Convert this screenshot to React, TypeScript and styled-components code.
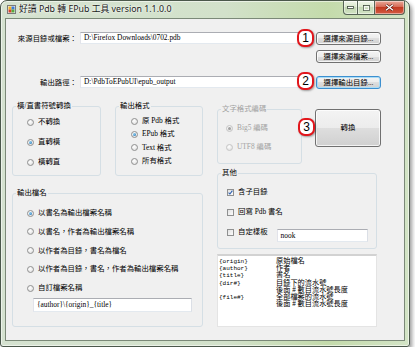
import React from "react";
import styled, { createGlobalStyle } from "styled-components";

const GlobalStyle = createGlobalStyle`
  html, body { margin: 0; padding: 0; background: #fff; }
  body {
    font-family: "Liberation Serif", "Noto Sans CJK TC", serif;
    font-size: 7.4px;
    line-height: 10px;
    color: #000;
  }
`;

const Window = styled.div`
  box-sizing: border-box;
  width: 410px;
  height: 347px;
  display: flex;
  flex-direction: column;
  padding: 0 4px 5px 4px;
  border: 1px solid #4b584b;
  border-radius: 7px 7px 3px 3px;
  background: linear-gradient(90deg, #d5e2d0 0%, #d2e1ca 55%, #c4dbab 80%, #d3e4c6 100%);
  box-shadow: inset 0 0 0 1px rgba(255, 255, 255, 0.55), 2px 3px 4px rgba(0, 0, 0, 0.4);
`;

const TitleBar = styled.div`
  height: 17px;
  display: flex;
  align-items: flex-start;
`;

const AppIcon = styled.svg`
  flex: none;
  margin: 4px 3px 0 2px;
`;

const Title = styled.span`
  font-family: "Noto Sans", "Noto Sans CJK TC", sans-serif;
  font-size: 8.8px;
  line-height: 17px;
  color: #1a1a1a;
  white-space: nowrap;
  text-shadow: 0 0 4px #fff, 0 0 2px #fff;
`;

const Caption = styled.div`
  margin-left: auto;
  display: flex;
`;

const CaptionButton = styled.div<{ $w: number; $close?: boolean; $pos: "l" | "m" | "r" }>`
  box-sizing: border-box;
  width: ${(p) => p.$w}px;
  height: 14px;
  display: flex;
  align-items: center;
  justify-content: center;
  border: 1px solid #566456;
  border-top: none;
  border-left: ${(p) => (p.$pos === "l" ? "1px solid #566456" : "none")};
  border-radius: ${(p) => (p.$pos === "l" ? "0 0 0 4px" : p.$pos === "r" ? "0 0 4px 0" : "0")};
  background: ${(p) =>
    p.$close
      ? "linear-gradient(#e9a898, #d66a55 45%, #c23a21 50%, #d45b43 100%)"
      : "linear-gradient(rgba(255,255,255,0.7), rgba(235,242,230,0.5) 45%, rgba(190,210,180,0.5) 50%, rgba(215,230,205,0.6) 100%)"};
  box-shadow: inset 0 0 0 1px rgba(255, 255, 255, 0.45);
`;

const Content = styled.div`
  flex: 1;
  box-sizing: border-box;
  border: 1px solid #7b8978;
  background: #f0f0f0;
  padding-top: 13px;
`;

const PathGrid = styled.div`
  display: grid;
  grid-template-columns: 74px 236px 65px;
  grid-template-rows: 13px 21px 13px;
  row-gap: 5px;
  align-items: start;
`;

const FieldLabel = styled.div`
  line-height: 13px;
  text-align: right;
  padding-right: 3px;
  white-space: nowrap;
`;

const Cell = styled.div`
  position: relative;
`;

const TextBox = styled.div<{ $w: number; $h?: number }>`
  box-sizing: border-box;
  width: ${(p) => p.$w}px;
  height: ${(p) => p.$h ?? 12}px;
  line-height: ${(p) => (p.$h ?? 12) - 2}px;
  padding: 0 3px;
  border: 1px solid;
  border-color: #abadb3 #dbdfe6 #e3e9ef #e2e3ea;
  background: #fff;
  white-space: nowrap;
  overflow: hidden;
  flex: none;
`;

const Button = styled.div<{ $w: number; $h: number; $focus?: boolean }>`
  box-sizing: border-box;
  width: ${(p) => p.$w}px;
  height: ${(p) => p.$h}px;
  display: flex;
  align-items: center;
  justify-content: center;
  white-space: nowrap;
  border: 1px solid ${(p) => (p.$focus ? "#3c8fcf" : "#707070")};
  border-radius: 3px;
  background: linear-gradient(#f3f3f3, #ececec 50%, #dedede 50%, #d0d0d0);
  box-shadow: inset 0 0 0 1px ${(p) => (p.$focus ? "#a9dcf7" : "rgba(255,255,255,0.75)")};
`;

const Badge = styled.div<{ $left: number; $top: number }>`
  position: absolute;
  left: ${(p) => p.$left}px;
  top: ${(p) => p.$top}px;
  box-sizing: border-box;
  width: 17px;
  height: 18px;
  border: 2px solid #e2161c;
  border-radius: 7px;
  background: #fff;
  color: #000;
  font-family: "Liberation Sans", Arial, sans-serif;
  font-size: 12px;
  line-height: 14px;
  text-align: center;
  box-shadow: 1px 1px 2px rgba(0, 0, 0, 0.35);
  z-index: 2;
`;

const Lower = styled.div`
  display: grid;
  grid-template-columns: 191px 164px;
  column-gap: 14px;
  margin: 13px 0 0 6px;
  align-items: start;
`;

const Column = styled.div`
  display: flex;
  flex-direction: column;
`;

const TopRow = styled.div`
  display: flex;
  align-items: flex-start;
`;

const Group = styled.fieldset<{ $w: number; $h: number; $disabled?: boolean; $mt?: number; $ml?: number }>`
  box-sizing: border-box;
  margin: ${(p) => p.$mt ?? 0}px 0 0 ${(p) => p.$ml ?? 0}px;
  padding: 0;
  min-width: 0;
  width: ${(p) => p.$w}px;
  height: ${(p) => p.$h}px;
  border: 1px solid #d5dfe5;
  border-radius: 3px;
  color: ${(p) => (p.$disabled ? "#a3a3a3" : "inherit")};
  flex: none;
`;

const Legend = styled.legend`
  margin-left: 3px;
  padding: 0 1px;
  line-height: 8px;
  white-space: nowrap;
`;

const OptionList = styled.div<{ $gap: number; $top: number; $left: number }>`
  display: flex;
  flex-direction: column;
  gap: ${(p) => p.$gap}px;
  padding: ${(p) => p.$top}px 0 0 ${(p) => p.$left}px;
`;

const Option = styled.div`
  display: flex;
  align-items: center;
  gap: 4px;
  height: 10px;
  line-height: 10px;
  white-space: nowrap;
`;

const RadioDot = styled.span<{ $checked?: boolean; $disabled?: boolean }>`
  position: relative;
  flex: none;
  box-sizing: border-box;
  width: 7px;
  height: 7px;
  border-radius: 50%;
  border: 1px solid ${(p) => (p.$disabled ? "#c6c6c6" : "#8f9090")};
  background: radial-gradient(circle at 40% 35%, #ffffff, #dadada);
  &::after {
    content: "";
    display: ${(p) => (p.$checked ? "block" : "none")};
    position: absolute;
    left: 1px;
    top: 1px;
    width: 3px;
    height: 3px;
    border-radius: 50%;
    background: ${(p) =>
      p.$disabled ? "#a0a0a0" : "radial-gradient(circle at 35% 35%, #8fd3f7, #1a68a8)"};
  }
`;

const CheckBoxFrame = styled.span`
  flex: none;
  box-sizing: border-box;
  width: 7px;
  height: 7px;
  display: flex;
  align-items: center;
  justify-content: center;
  border: 1px solid #8f9090;
  background: linear-gradient(135deg, #e2e2e2, #fbfbfb);
`;

const CustomName = styled.div`
  margin: 5px 0 0 20px;
`;

const NookBox = styled(TextBox)`
  align-self: flex-start;
  margin: 2px 0 0 5px;
`;

const ConvertWrap = styled.div`
  position: relative;
  margin: 7px 0 0 13px;
`;

const HelpBox = styled.div`
  box-sizing: border-box;
  width: 160px;
  height: 73px;
  margin-top: 5px;
  padding: 2px 0 0 1px;
  background: #fff;
  border: 1px solid #e4e4e4;
  border-top: 2px solid #d2d2d2;
  display: grid;
  grid-template-columns: 57px 1fr;
  grid-auto-rows: 7.2px;
  line-height: 7.2px;
  white-space: nowrap;
`;

const HelpKey = styled.span`
  font-family: "Liberation Mono", monospace;
  font-size: 6px;
`;

const HelpText = styled.span`
  font-size: 7.2px;
`;

function Radio({ label, checked, disabled }: { label: string; checked?: boolean; disabled?: boolean }) {
  return (
    <Option>
      <RadioDot $checked={checked} $disabled={disabled} />
      <span>{label}</span>
    </Option>
  );
}

function Check({ checked }: { checked?: boolean }) {
  return (
    <CheckBoxFrame>
      {checked && (
        <svg width="5" height="5" viewBox="0 0 5 5">
          <path d="M0.6 2.6 L1.9 4 L4.4 0.6" stroke="#2b5fb0" strokeWidth="1.1" fill="none" />
        </svg>
      )}
    </CheckBoxFrame>
  );
}

const helpRows: [string, string][] = [
  ["{origin}", "原始檔名"],
  ["{author}", "作者"],
  ["{title}", "書名"],
  ["{dir#}", "目錄下的流水號"],
  ["", "後面 # 數目流水號長度"],
  ["{file#}", "全部檔案的流水號"],
  ["", "後面 # 數目流水號長度"],
];

export default function App() {
  return (
    <>
      <GlobalStyle />
      <Window>
        <TitleBar>
          <AppIcon width="9" height="9" viewBox="0 0 9 9">
            <rect x="0.5" y="0.5" width="8" height="8" fill="#f4f4f4" stroke="#7a7a7a" />
            <rect x="1.5" y="1.5" width="3" height="3" fill="#f2b420" />
            <rect x="4.5" y="1.5" width="3" height="3" fill="#3b7ad8" />
            <rect x="1.5" y="4.5" width="3" height="3" fill="#d8402a" />
            <rect x="4.5" y="4.5" width="3" height="3" fill="#56a83c" />
          </AppIcon>
          <Title>好讀 Pdb 轉 EPub 工具 version 1.1.0.0</Title>
          <Caption>
            <CaptionButton $w={15} $pos="l">
              <svg width="7" height="3" viewBox="0 0 7 3">
                <rect x="0.5" y="0.5" width="6" height="2" fill="#fff" stroke="#3d4a3d" strokeWidth="0.8" />
              </svg>
            </CaptionButton>
            <CaptionButton $w={17} $pos="m">
              <svg width="7" height="6" viewBox="0 0 7 6">
                <rect x="0.5" y="0.5" width="6" height="5" fill="none" stroke="#3d4a3d" strokeWidth="0.8" />
                <rect x="1.3" y="1.8" width="4.4" height="2.9" fill="none" stroke="#fff" strokeWidth="0.9" />
              </svg>
            </CaptionButton>
            <CaptionButton $w={30} $pos="r" $close>
              <svg width="9" height="7" viewBox="0 0 9 7">
                <path d="M1 0.8 L8 6.2 M8 0.8 L1 6.2" stroke="#5a1a10" strokeWidth="2.6" />
                <path d="M1 0.8 L8 6.2 M8 0.8 L1 6.2" stroke="#fff" strokeWidth="1.4" />
              </svg>
            </CaptionButton>
          </Caption>
        </TitleBar>

        <Content>
          <PathGrid>
            <FieldLabel>來源目錄或檔案：</FieldLabel>
            <Cell>
              <TextBox $w={225}>D:\Firefox Downloads\0702.pdb</TextBox>
              <Badge $left={217} $top={-3}>1</Badge>
            </Cell>
            <Button $w={65} $h={13}>選擇來源目錄...</Button>

            <div />
            <div />
            <Button $w={65} $h={13}>選擇來源檔案...</Button>

            <FieldLabel>輸出路徑：</FieldLabel>
            <Cell>
              <TextBox $w={225}>D:\PdbToEPubUI\epub_output</TextBox>
              <Badge $left={217} $top={-4}>2</Badge>
            </Cell>
            <Button $w={65} $h={13} $focus>選擇輸出目錄...</Button>
          </PathGrid>

          <Lower>
            <Column>
              <TopRow>
                <Group $w={89} $h={74}>
                  <Legend>橫/直書符號轉換</Legend>
                  <OptionList $gap={10} $top={7} $left={14}>
                    <Radio label="不轉換" />
                    <Radio label="直轉橫" checked />
                    <Radio label="橫轉直" />
                  </OptionList>
                </Group>
                <Group $w={88} $h={74} $ml={14}>
                  <Legend>輸出格式</Legend>
                  <OptionList $gap={3.4} $top={6} $left={15}>
                    <Radio label="原 Pdb 格式" />
                    <Radio label="EPub 格式" checked />
                    <Radio label="Text 格式" />
                    <Radio label="所有格式" />
                  </OptionList>
                </Group>
              </TopRow>

              <Group $w={191} $h={138} $mt={13}>
                <Legend>輸出檔名</Legend>
                <OptionList $gap={8.75} $top={11} $left={14}>
                  <Radio label="以書名為輸出檔案名稱" checked />
                  <Radio label="以書名，作者為輸出檔案名稱" />
                  <Radio label="以作者為目錄，書名為檔名" />
                  <Radio label="以作者為目錄，書名，作者為輸出檔案名稱" />
                  <Radio label="自訂檔案名稱" />
                </OptionList>
                <CustomName>
                  <TextBox $w={159} $h={14}>{"{author}\\{origin}_{title}"}</TextBox>
                </CustomName>
              </Group>
            </Column>

            <Column>
              <TopRow>
                <Group $w={85} $h={59} $mt={3} $disabled>
                  <Legend>文字格式編碼</Legend>
                  <OptionList $gap={9} $top={10} $left={8}>
                    <Radio label="Big5 編碼" checked disabled />
                    <Radio label="UTF8 編碼" disabled />
                  </OptionList>
                </Group>
                <ConvertWrap>
                  <Button $w={66} $h={38}>轉換</Button>
                  <Badge $left={-17} $top={9}>3</Badge>
                </ConvertWrap>
              </TopRow>

              <Group $w={160} $h={80} $mt={5}>
                <Legend>其他</Legend>
                <OptionList $gap={10} $top={10} $left={9}>
                  <Option>
                    <Check checked />
                    <span>含子目錄</span>
                  </Option>
                  <Option>
                    <Check />
                    <span>回寫 Pdb 書名</span>
                  </Option>
                  <Option>
                    <Check />
                    <span>自定樣板</span>
                    <NookBox $w={91} $h={13}>nook</NookBox>
                  </Option>
                </OptionList>
              </Group>

              <HelpBox>
                {helpRows.map(([k, v], i) => (
                  <React.Fragment key={i}>
                    <HelpKey>{k}</HelpKey>
                    <HelpText>{v}</HelpText>
                  </React.Fragment>
                ))}
              </HelpBox>
            </Column>
          </Lower>
        </Content>
      </Window>
    </>
  );
}
